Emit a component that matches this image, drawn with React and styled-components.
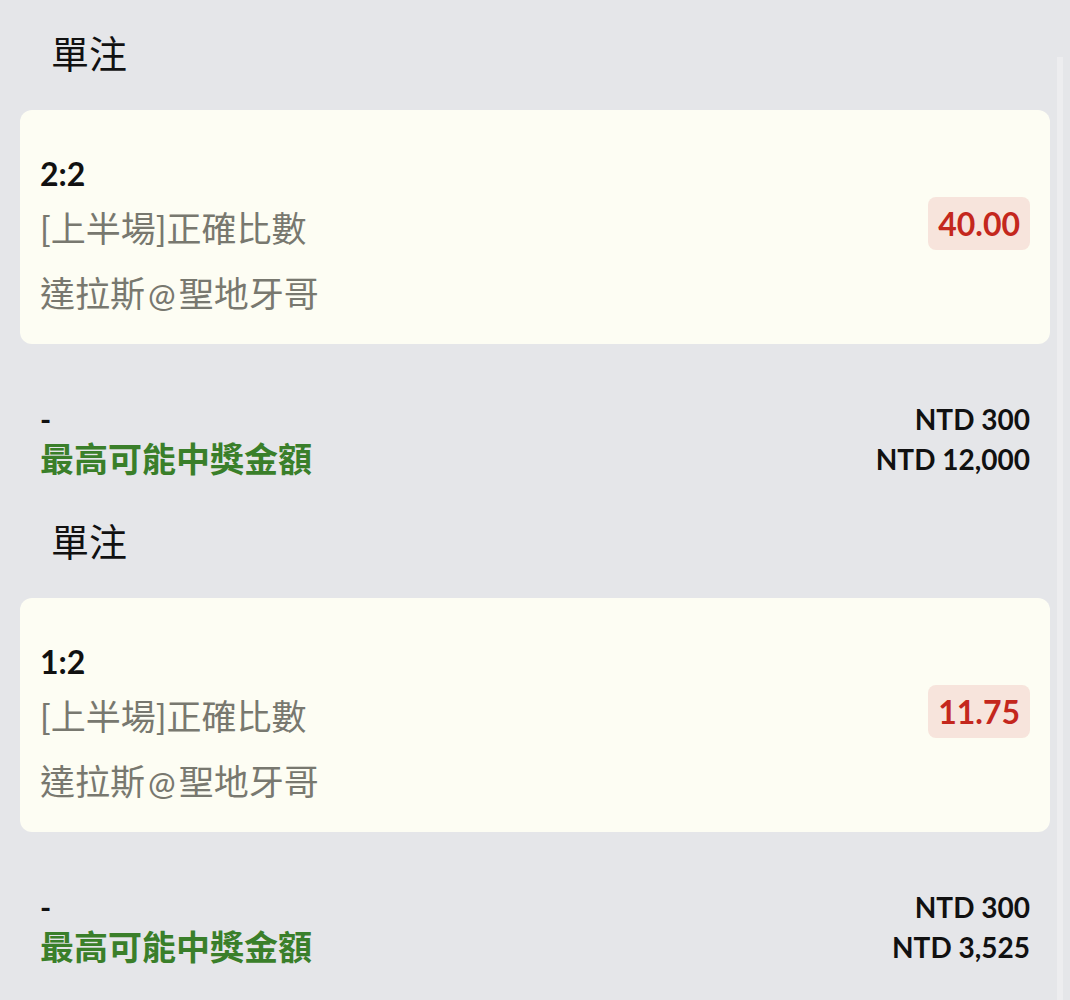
import React from "react";
import styled, { createGlobalStyle } from "styled-components";

const GlobalStyle = createGlobalStyle`
  html, body {
    margin: 0;
    padding: 0;
    background: #e5e6e9;
  }
  body {
    font-family: Lato, "Noto Sans CJK TC", sans-serif;
    color: #111;
  }
`;

const Page = styled.div`
  position: relative;
  width: 1070px;
  min-height: 1000px;
  padding: 0 20px;
  box-sizing: border-box;
  overflow: hidden;
`;

const ScrollTrack = styled.div`
  position: absolute;
  top: 57px;
  bottom: 0;
  left: 1057px;
  width: 6px;
  background: rgba(255, 255, 255, 0.3);
`;

const Block = styled.section`
  display: flex;
  flex-direction: column;
  height: 488px;
  padding-top: 30px;
  box-sizing: border-box;
`;

const Title = styled.h2`
  margin: 0;
  padding-left: 31px;
  font-size: 38px;
  font-weight: 400;
  line-height: 46px;
  color: #111;
`;

const Card = styled.div`
  display: flex;
  justify-content: space-between;
  margin-top: 34px;
  height: 234px;
  padding: 42px 20px 0;
  box-sizing: border-box;
  background: #fdfdf3;
  border-radius: 12px;
`;

const Info = styled.div`
  display: flex;
  flex-direction: column;
`;

const Score = styled.div`
  font-size: 32px;
  font-weight: 700;
  line-height: 44px;
  color: #111;
`;

const Line = styled.div`
  font-size: 35px;
  line-height: 65px;
  color: #78786f;
`;

const At = styled.span`
  margin: 0 3px;
  font-size: 33px;
`;

const Odds = styled.div`
  align-self: flex-start;
  margin-top: 45px;
  padding: 0 10px;
  height: 53px;
  line-height: 53px;
  font-size: 32px;
  font-weight: 700;
  color: #c4271d;
  background: #f7e4dc;
  border-radius: 8px;
`;

const Summary = styled.div`
  display: grid;
  grid-template-columns: 1fr auto;
  margin-top: 55px;
  padding: 0 20px;
`;

const Dash = styled.div`
  font-size: 30px;
  font-weight: 700;
  line-height: 40px;
`;

const Payout = styled.div`
  font-size: 34px;
  font-weight: 700;
  line-height: 40px;
  color: #3a7f2a;
`;

const Amount = styled.div`
  text-align: right;
  font-size: 28px;
  font-weight: 700;
  line-height: 40px;
  color: #111;
`;

const bets = [
  { score: "2:2", odds: "40.00", stake: "NTD 300", win: "NTD 12,000" },
  { score: "1:2", odds: "11.75", stake: "NTD 300", win: "NTD 3,525" },
];

function BetBlock({ bet }) {
  return (
    <Block>
      <Title>單注</Title>
      <Card>
        <Info>
          <Score>{bet.score}</Score>
          <Line>[上半場]正確比數</Line>
          <Line>
            達拉斯<At>@</At>聖地牙哥
          </Line>
        </Info>
        <Odds>{bet.odds}</Odds>
      </Card>
      <Summary>
        <Dash>-</Dash>
        <Amount>{bet.stake}</Amount>
        <Payout>最高可能中獎金額</Payout>
        <Amount>{bet.win}</Amount>
      </Summary>
    </Block>
  );
}

export default function App() {
  return (
    <>
      <GlobalStyle />
      <Page>
        {bets.map((bet, i) => (
          <BetBlock key={i} bet={bet} />
        ))}
        <ScrollTrack />
      </Page>
    </>
  );
}
